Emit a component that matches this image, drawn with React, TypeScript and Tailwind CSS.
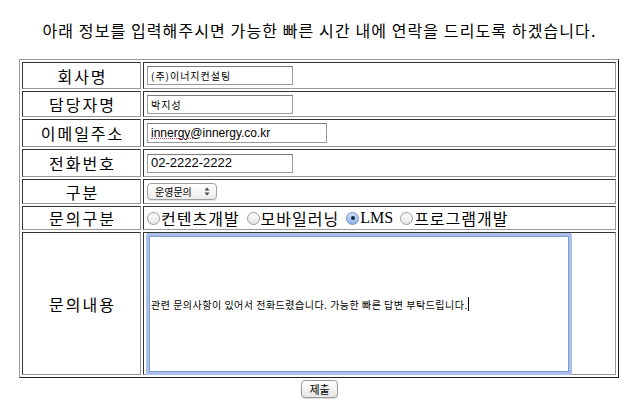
const kr = "font-['Noto_Sans_CJK_KR',sans-serif]";
const small = "font-['Liberation_Sans','Noto_Sans_CJK_KR',sans-serif]";

const Label = ({ h, text }: { h: string; text: string }) => (
  <div
    className={`${h} border border-t-[#333] border-l-[#333] border-b-[#999] border-r-[#999] flex items-center justify-center pl-[2px] text-[16px] tracking-[2px] text-black ${kr}`}
  >
    {text}
  </div>
);

const Cell = ({ h, children }: { h: string; children: React.ReactNode }) => (
  <div
    className={`${h} border border-t-[#333] border-l-[#333] border-b-[#999] border-r-[#999] flex items-center pl-[3px]`}
  >
    {children}
  </div>
);

const TextBox = ({ w, h, size, value }: { w: string; h: string; size: string; value: string }) => (
  <div
    className={`${w} ${h} ${size} border border-[#9a9a9a] border-t-[#7a7a7a] bg-white flex items-center pl-[3px] text-black whitespace-nowrap overflow-hidden`}
  >
    {value}
  </div>
);

const Radio = ({ checked, label, serif }: { checked?: boolean; label: string; serif?: boolean }) => (
  <div className="flex items-center">
    {checked ? (
      <span className="w-[13px] h-[13px] rounded-full border border-[#6b8fc9] bg-gradient-to-b from-[#cfe0f7] to-[#8fb3e6] flex items-center justify-center">
        <span className="w-[4px] h-[4px] rounded-full bg-[#1a2a40]" />
      </span>
    ) : (
      <span className="w-[13px] h-[13px] rounded-full border border-[#9a9a9a] bg-gradient-to-b from-[#ffffff] to-[#e4e4e4]" />
    )}
    <span
      className={`ml-[1px] text-[16px] text-black ${
        serif ? "font-['Liberation_Serif',serif]" : `${kr} tracking-[1px]`
      }`}
    >
      {label}
    </span>
  </div>
);

export default function App() {
  return (
    <div className="w-[639px] h-[412px] bg-white flex flex-col">
      <p className={`mt-[20px] h-[20px] leading-[20px] text-center text-[16px] tracking-[1.1px] text-black ${kr}`}>
        아래 정보를 입력해주시면 가능한 빠른 시간 내에 연락을 드리도록 하겠습니다.
      </p>

      <div className="ml-[19px] mt-[19px] w-[600px] border border-t-[#999] border-l-[#999] border-b-[#222] border-r-[#222] p-[2px] grid grid-cols-[119px_473px] gap-[2px]">
        <Label h="h-[27px]" text="회사명" />
        <Cell h="h-[27px]">
          <TextBox w="w-[146px]" h="h-[19px]" size={`text-[10px] tracking-[1px] ${kr}`} value="(주)이너지컨설팅" />
        </Cell>

        <Label h="h-[26px]" text="담당자명" />
        <Cell h="h-[26px]">
          <TextBox w="w-[146px]" h="h-[19px]" size={`text-[10px] tracking-[1px] ${kr}`} value="박지성" />
        </Cell>

        <Label h="h-[28px]" text="이메일주소" />
        <Cell h="h-[28px]">
          <div className="relative">
            <TextBox w="w-[180px]" h="h-[20px]" size={`text-[12px] ${small}`} value="innergy@innergy.co.kr" />
            <span className="absolute left-[4px] top-[15px] w-[42px] border-b border-dotted border-[#e04040]" />
          </div>
        </Cell>

        <Label h="h-[28px]" text="전화번호" />
        <Cell h="h-[28px]">
          <TextBox w="w-[146px]" h="h-[19px]" size={`text-[13px] ${small}`} value="02-2222-2222" />
        </Cell>

        <Label h="h-[25px]" text="구분" />
        <Cell h="h-[25px]">
          <div className="w-[70px] h-[17px] rounded-[4px] border border-[#a0a0a0] bg-gradient-to-b from-[#ffffff] to-[#ececec] flex items-center justify-between pl-[7px] pr-[6px] shadow-[0_1px_1px_rgba(0,0,0,0.12)]">
            <span className={`text-[10px] text-black ${kr}`}>운영문의</span>
            <svg width="6" height="9" viewBox="0 0 6 9">
              <path d="M3 0.5 L5.5 3.5 H0.5 Z" fill="#444" />
              <path d="M3 8.5 L5.5 5.5 H0.5 Z" fill="#444" />
            </svg>
          </div>
        </Cell>

        <Label h="h-[24px]" text="문의구분" />
        <Cell h="h-[24px]">
          <div className="flex items-center gap-[7px]">
            <Radio label="컨텐츠개발" />
            <Radio label="모바일러닝" />
            <Radio checked serif label="LMS" />
            <Radio label="프로그램개발" />
          </div>
        </Cell>

        <Label h="h-[143px]" text="문의내용" />
        <div className="h-[143px] border border-t-[#333] border-l-[#333] border-b-[#999] border-r-[#999] pl-[2px]">
          <div className="w-[426px] h-[142px] rounded-[2px] border-[3px] border-[#a9c1e8] bg-white">
            <div className="w-full h-full border border-[#7d9bd0] flex items-center pl-[1px]">
              <span className={`text-[10px] tracking-[0.5px] text-black ${kr}`}>
                관련 문의사항이 있어서 전화드렸습니다. 가능한 빠른 답변 부탁드립니다.
              </span>
              <span className="w-[1px] h-[14px] bg-black" />
            </div>
          </div>
        </div>
      </div>

      <div className="mt-[2px] flex justify-center">
        <button
          className={`w-[37px] h-[18px] rounded-[4px] border border-[#9a9a9a] bg-gradient-to-b from-[#ffffff] to-[#e6e6e6] text-[11px] leading-none text-black ${kr} shadow-[0_1px_1px_rgba(0,0,0,0.15)]`}
        >
          제출
        </button>
      </div>
    </div>
  );
}
